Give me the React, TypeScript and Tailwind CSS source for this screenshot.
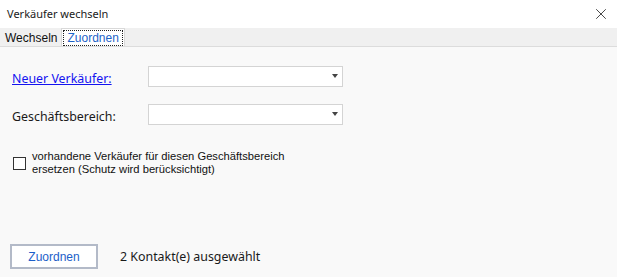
import { X } from 'lucide-react'

function Combo() {
    return (
        <div className="relative h-[21px] w-[195px] border border-[#d4d4d4] bg-white">
            <div className="absolute right-[4px] top-[7px] h-0 w-0 border-x-[3.5px] border-t-[4px] border-x-transparent border-t-[#444]" />
        </div>
    )
}

export default function App() {
    return (
        <div className="flex h-[277px] w-[617px] flex-col bg-[#f9f9f9] font-['Noto_Sans',sans-serif] text-[#1a1a1a]">
            <div className="flex h-[28px] items-center justify-between bg-white pl-[7px] pr-[7px]">
                <span className="text-[11px]">Verkäufer wechseln</span>
                <X className="h-[18px] w-[18px] text-[#222]" strokeWidth={1.1} />
            </div>
            <div className="flex h-[19px] items-end border-b border-[#dcdcdc] bg-[#f0f0f0] pl-[2px] font-['Liberation_Sans',sans-serif] text-[12px]">
                <div className="flex h-[17px] items-center px-[3px] text-[#111]">Wechseln</div>
                <div className="ml-[1px] flex h-[18px] items-center border border-b-0 border-[#d9d9d9] bg-white px-[1px]">
                    <span className="border border-dotted border-[#222] px-[3px] leading-[14px] text-[#1e64c8]">Zuordnen</span>
                </div>
            </div>
            <div className="flex flex-1 flex-col">
                <div className="mt-[19px] flex items-start">
                    <a className="h-[21px] w-[148px] pl-[12px] text-[12.4px] leading-[25px] text-[#1414f0] underline">Neuer Verkäufer:</a>
                    <Combo />
                </div>
                <div className="mt-[17px] flex items-start">
                    <span className="h-[21px] w-[148px] pl-[12px] text-[12.4px] leading-[26px]">Geschäftsbereich:</span>
                    <Combo />
                </div>
                <div className="mt-[25px] flex items-start pl-[13px]">
                    <div className="mt-[7px] h-[13px] w-[13px] border border-[#333] bg-white" />
                    <div className="ml-[6px] font-['Liberation_Sans',sans-serif] text-[11.2px] leading-[13px] text-[#111]">
                        vorhandene Verkäufer für diesen Geschäftsbereich
                        <br />
                        ersetzen (Schutz wird berücksichtigt)
                    </div>
                </div>
                <div className="mt-auto mb-[8px] flex items-center pl-[10px]">
                    <button className="h-[25px] w-[88px] border-2 border-[#b3bac8] bg-white font-['Liberation_Sans',sans-serif] text-[12px] text-[#1c5ec9]">
                        Zuordnen
                    </button>
                    <span className="ml-[22px] pt-[2px] text-[12.4px]">2 Kontakt(e) ausgewählt</span>
                </div>
            </div>
        </div>
    )
}
